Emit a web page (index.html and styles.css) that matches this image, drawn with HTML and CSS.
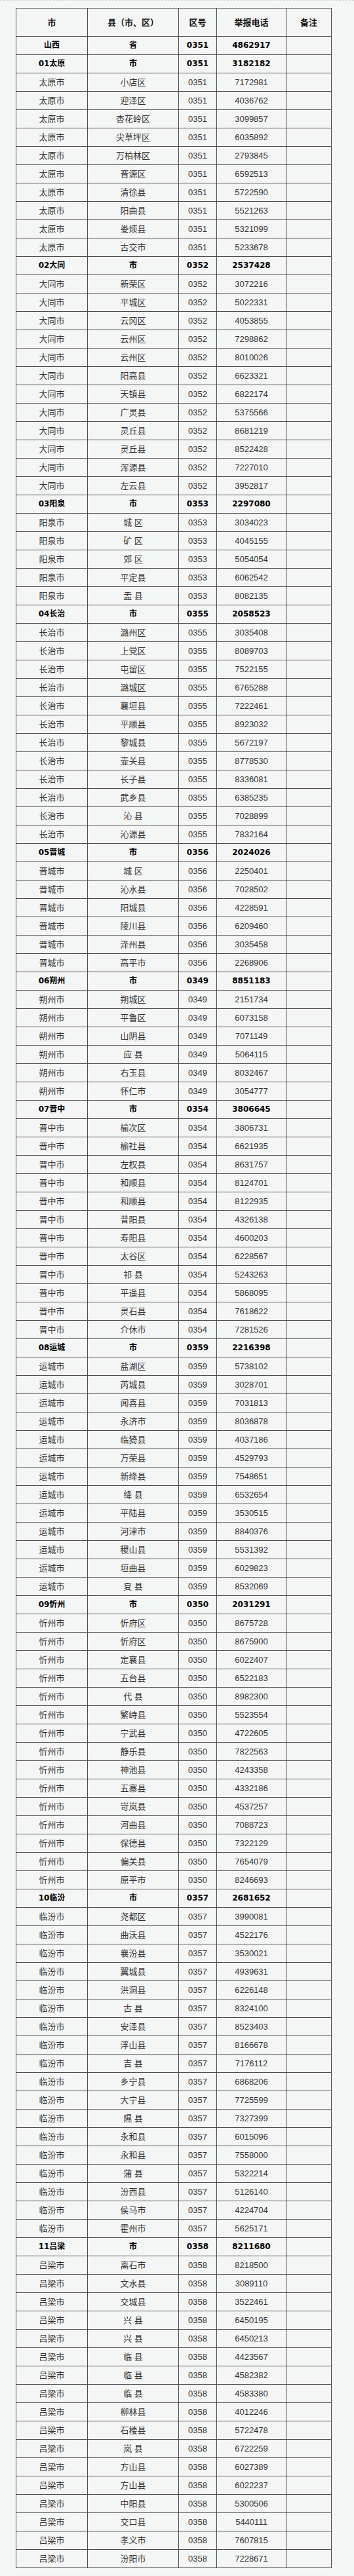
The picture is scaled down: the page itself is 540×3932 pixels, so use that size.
FILE: index.html
```html
<!DOCTYPE html>
<html lang="zh-CN">
<head>
<meta charset="utf-8">
<title>举报电话</title>
<link rel="stylesheet" href="styles.css">
</head>
<body>
<div class="page">
<table class="tbl">
<colgroup><col class="c1"><col class="c2"><col class="c3"><col class="c4"><col class="c5"></colgroup>
<thead>
<tr class="hd"><th>市</th><th>县（市、区）</th><th>区号</th><th>举报电话</th><th>备注</th></tr>
</thead>
<tbody>
<tr class="b"><td>山西</td><td>省</td><td>0351</td><td>4862917</td><td></td></tr>
<tr class="b"><td>01太原</td><td>市</td><td>0351</td><td>3182182</td><td></td></tr>
<tr><td>太原市</td><td>小店区</td><td>0351</td><td>7172981</td><td></td></tr>
<tr><td>太原市</td><td>迎泽区</td><td>0351</td><td>4036762</td><td></td></tr>
<tr><td>太原市</td><td>杏花岭区</td><td>0351</td><td>3099857</td><td></td></tr>
<tr><td>太原市</td><td>尖草坪区</td><td>0351</td><td>6035892</td><td></td></tr>
<tr><td>太原市</td><td>万柏林区</td><td>0351</td><td>2793845</td><td></td></tr>
<tr><td>太原市</td><td>晋源区</td><td>0351</td><td>6592513</td><td></td></tr>
<tr><td>太原市</td><td>清徐县</td><td>0351</td><td>5722590</td><td></td></tr>
<tr><td>太原市</td><td>阳曲县</td><td>0351</td><td>5521263</td><td></td></tr>
<tr><td>太原市</td><td>娄烦县</td><td>0351</td><td>5321099</td><td></td></tr>
<tr><td>太原市</td><td>古交市</td><td>0351</td><td>5233678</td><td></td></tr>
<tr class="b"><td>02大同</td><td>市</td><td>0352</td><td>2537428</td><td></td></tr>
<tr><td>大同市</td><td>新荣区</td><td>0352</td><td>3072216</td><td></td></tr>
<tr><td>大同市</td><td>平城区</td><td>0352</td><td>5022331</td><td></td></tr>
<tr><td>大同市</td><td>云冈区</td><td>0352</td><td>4053855</td><td></td></tr>
<tr><td>大同市</td><td>云州区</td><td>0352</td><td>7298862</td><td></td></tr>
<tr><td>大同市</td><td>云州区</td><td>0352</td><td>8010026</td><td></td></tr>
<tr><td>大同市</td><td>阳高县</td><td>0352</td><td>6623321</td><td></td></tr>
<tr><td>大同市</td><td>天镇县</td><td>0352</td><td>6822174</td><td></td></tr>
<tr><td>大同市</td><td>广灵县</td><td>0352</td><td>5375566</td><td></td></tr>
<tr><td>大同市</td><td>灵丘县</td><td>0352</td><td>8681219</td><td></td></tr>
<tr><td>大同市</td><td>灵丘县</td><td>0352</td><td>8522428</td><td></td></tr>
<tr><td>大同市</td><td>浑源县</td><td>0352</td><td>7227010</td><td></td></tr>
<tr><td>大同市</td><td>左云县</td><td>0352</td><td>3952817</td><td></td></tr>
<tr class="b"><td>03阳泉</td><td>市</td><td>0353</td><td>2297080</td><td></td></tr>
<tr><td>阳泉市</td><td>城 区</td><td>0353</td><td>3034023</td><td></td></tr>
<tr><td>阳泉市</td><td>矿 区</td><td>0353</td><td>4045155</td><td></td></tr>
<tr><td>阳泉市</td><td>郊 区</td><td>0353</td><td>5054054</td><td></td></tr>
<tr><td>阳泉市</td><td>平定县</td><td>0353</td><td>6062542</td><td></td></tr>
<tr><td>阳泉市</td><td>盂 县</td><td>0353</td><td>8082135</td><td></td></tr>
<tr class="b"><td>04长治</td><td>市</td><td>0355</td><td>2058523</td><td></td></tr>
<tr><td>长治市</td><td>潞州区</td><td>0355</td><td>3035408</td><td></td></tr>
<tr><td>长治市</td><td>上党区</td><td>0355</td><td>8089703</td><td></td></tr>
<tr><td>长治市</td><td>屯留区</td><td>0355</td><td>7522155</td><td></td></tr>
<tr><td>长治市</td><td>潞城区</td><td>0355</td><td>6765288</td><td></td></tr>
<tr><td>长治市</td><td>襄垣县</td><td>0355</td><td>7222461</td><td></td></tr>
<tr><td>长治市</td><td>平顺县</td><td>0355</td><td>8923032</td><td></td></tr>
<tr><td>长治市</td><td>黎城县</td><td>0355</td><td>5672197</td><td></td></tr>
<tr><td>长治市</td><td>壶关县</td><td>0355</td><td>8778530</td><td></td></tr>
<tr><td>长治市</td><td>长子县</td><td>0355</td><td>8336081</td><td></td></tr>
<tr><td>长治市</td><td>武乡县</td><td>0355</td><td>6385235</td><td></td></tr>
<tr><td>长治市</td><td>沁 县</td><td>0355</td><td>7028899</td><td></td></tr>
<tr><td>长治市</td><td>沁源县</td><td>0355</td><td>7832164</td><td></td></tr>
<tr class="b"><td>05晋城</td><td>市</td><td>0356</td><td>2024026</td><td></td></tr>
<tr><td>晋城市</td><td>城 区</td><td>0356</td><td>2250401</td><td></td></tr>
<tr><td>晋城市</td><td>沁水县</td><td>0356</td><td>7028502</td><td></td></tr>
<tr><td>晋城市</td><td>阳城县</td><td>0356</td><td>4228591</td><td></td></tr>
<tr><td>晋城市</td><td>陵川县</td><td>0356</td><td>6209460</td><td></td></tr>
<tr><td>晋城市</td><td>泽州县</td><td>0356</td><td>3035458</td><td></td></tr>
<tr><td>晋城市</td><td>高平市</td><td>0356</td><td>2268906</td><td></td></tr>
<tr class="b"><td>06朔州</td><td>市</td><td>0349</td><td>8851183</td><td></td></tr>
<tr><td>朔州市</td><td>朔城区</td><td>0349</td><td>2151734</td><td></td></tr>
<tr><td>朔州市</td><td>平鲁区</td><td>0349</td><td>6073158</td><td></td></tr>
<tr><td>朔州市</td><td>山阴县</td><td>0349</td><td>7071149</td><td></td></tr>
<tr><td>朔州市</td><td>应 县</td><td>0349</td><td>5064115</td><td></td></tr>
<tr><td>朔州市</td><td>右玉县</td><td>0349</td><td>8032467</td><td></td></tr>
<tr><td>朔州市</td><td>怀仁市</td><td>0349</td><td>3054777</td><td></td></tr>
<tr class="b"><td>07晋中</td><td>市</td><td>0354</td><td>3806645</td><td></td></tr>
<tr><td>晋中市</td><td>榆次区</td><td>0354</td><td>3806731</td><td></td></tr>
<tr><td>晋中市</td><td>榆社县</td><td>0354</td><td>6621935</td><td></td></tr>
<tr><td>晋中市</td><td>左权县</td><td>0354</td><td>8631757</td><td></td></tr>
<tr><td>晋中市</td><td>和顺县</td><td>0354</td><td>8124701</td><td></td></tr>
<tr><td>晋中市</td><td>和顺县</td><td>0354</td><td>8122935</td><td></td></tr>
<tr><td>晋中市</td><td>昔阳县</td><td>0354</td><td>4326138</td><td></td></tr>
<tr><td>晋中市</td><td>寿阳县</td><td>0354</td><td>4600203</td><td></td></tr>
<tr><td>晋中市</td><td>太谷区</td><td>0354</td><td>6228567</td><td></td></tr>
<tr><td>晋中市</td><td>祁 县</td><td>0354</td><td>5243263</td><td></td></tr>
<tr><td>晋中市</td><td>平遥县</td><td>0354</td><td>5868095</td><td></td></tr>
<tr><td>晋中市</td><td>灵石县</td><td>0354</td><td>7618622</td><td></td></tr>
<tr><td>晋中市</td><td>介休市</td><td>0354</td><td>7281526</td><td></td></tr>
<tr class="b"><td>08运城</td><td>市</td><td>0359</td><td>2216398</td><td></td></tr>
<tr><td>运城市</td><td>盐湖区</td><td>0359</td><td>5738102</td><td></td></tr>
<tr><td>运城市</td><td>芮城县</td><td>0359</td><td>3028701</td><td></td></tr>
<tr><td>运城市</td><td>闻喜县</td><td>0359</td><td>7031813</td><td></td></tr>
<tr><td>运城市</td><td>永济市</td><td>0359</td><td>8036878</td><td></td></tr>
<tr><td>运城市</td><td>临猗县</td><td>0359</td><td>4037186</td><td></td></tr>
<tr><td>运城市</td><td>万荣县</td><td>0359</td><td>4529793</td><td></td></tr>
<tr><td>运城市</td><td>新绛县</td><td>0359</td><td>7548651</td><td></td></tr>
<tr><td>运城市</td><td>绛 县</td><td>0359</td><td>6532654</td><td></td></tr>
<tr><td>运城市</td><td>平陆县</td><td>0359</td><td>3530515</td><td></td></tr>
<tr><td>运城市</td><td>河津市</td><td>0359</td><td>8840376</td><td></td></tr>
<tr><td>运城市</td><td>稷山县</td><td>0359</td><td>5531392</td><td></td></tr>
<tr><td>运城市</td><td>垣曲县</td><td>0359</td><td>6029823</td><td></td></tr>
<tr><td>运城市</td><td>夏 县</td><td>0359</td><td>8532069</td><td></td></tr>
<tr class="b"><td>09忻州</td><td>市</td><td>0350</td><td>2031291</td><td></td></tr>
<tr><td>忻州市</td><td>忻府区</td><td>0350</td><td>8675728</td><td></td></tr>
<tr><td>忻州市</td><td>忻府区</td><td>0350</td><td>8675900</td><td></td></tr>
<tr><td>忻州市</td><td>定襄县</td><td>0350</td><td>6022407</td><td></td></tr>
<tr><td>忻州市</td><td>五台县</td><td>0350</td><td>6522183</td><td></td></tr>
<tr><td>忻州市</td><td>代 县</td><td>0350</td><td>8982300</td><td></td></tr>
<tr><td>忻州市</td><td>繁峙县</td><td>0350</td><td>5523554</td><td></td></tr>
<tr><td>忻州市</td><td>宁武县</td><td>0350</td><td>4722605</td><td></td></tr>
<tr><td>忻州市</td><td>静乐县</td><td>0350</td><td>7822563</td><td></td></tr>
<tr><td>忻州市</td><td>神池县</td><td>0350</td><td>4243358</td><td></td></tr>
<tr><td>忻州市</td><td>五寨县</td><td>0350</td><td>4332186</td><td></td></tr>
<tr><td>忻州市</td><td>岢岚县</td><td>0350</td><td>4537257</td><td></td></tr>
<tr><td>忻州市</td><td>河曲县</td><td>0350</td><td>7088723</td><td></td></tr>
<tr><td>忻州市</td><td>保德县</td><td>0350</td><td>7322129</td><td></td></tr>
<tr><td>忻州市</td><td>偏关县</td><td>0350</td><td>7654079</td><td></td></tr>
<tr><td>忻州市</td><td>原平市</td><td>0350</td><td>8246693</td><td></td></tr>
<tr class="b"><td>10临汾</td><td>市</td><td>0357</td><td>2681652</td><td></td></tr>
<tr><td>临汾市</td><td>尧都区</td><td>0357</td><td>3990081</td><td></td></tr>
<tr><td>临汾市</td><td>曲沃县</td><td>0357</td><td>4522176</td><td></td></tr>
<tr><td>临汾市</td><td>襄汾县</td><td>0357</td><td>3530021</td><td></td></tr>
<tr><td>临汾市</td><td>翼城县</td><td>0357</td><td>4939631</td><td></td></tr>
<tr><td>临汾市</td><td>洪洞县</td><td>0357</td><td>6226148</td><td></td></tr>
<tr><td>临汾市</td><td>古 县</td><td>0357</td><td>8324100</td><td></td></tr>
<tr><td>临汾市</td><td>安泽县</td><td>0357</td><td>8523403</td><td></td></tr>
<tr><td>临汾市</td><td>浮山县</td><td>0357</td><td>8166678</td><td></td></tr>
<tr><td>临汾市</td><td>吉 县</td><td>0357</td><td>7176112</td><td></td></tr>
<tr><td>临汾市</td><td>乡宁县</td><td>0357</td><td>6868206</td><td></td></tr>
<tr><td>临汾市</td><td>大宁县</td><td>0357</td><td>7725599</td><td></td></tr>
<tr><td>临汾市</td><td>隰 县</td><td>0357</td><td>7327399</td><td></td></tr>
<tr><td>临汾市</td><td>永和县</td><td>0357</td><td>6015096</td><td></td></tr>
<tr><td>临汾市</td><td>永和县</td><td>0357</td><td>7558000</td><td></td></tr>
<tr><td>临汾市</td><td>蒲 县</td><td>0357</td><td>5322214</td><td></td></tr>
<tr><td>临汾市</td><td>汾西县</td><td>0357</td><td>5126140</td><td></td></tr>
<tr><td>临汾市</td><td>侯马市</td><td>0357</td><td>4224704</td><td></td></tr>
<tr><td>临汾市</td><td>霍州市</td><td>0357</td><td>5625171</td><td></td></tr>
<tr class="b"><td>11吕梁</td><td>市</td><td>0358</td><td>8211680</td><td></td></tr>
<tr><td>吕梁市</td><td>离石市</td><td>0358</td><td>8218500</td><td></td></tr>
<tr><td>吕梁市</td><td>文水县</td><td>0358</td><td>3089110</td><td></td></tr>
<tr><td>吕梁市</td><td>交城县</td><td>0358</td><td>3522461</td><td></td></tr>
<tr><td>吕梁市</td><td>兴 县</td><td>0358</td><td>6450195</td><td></td></tr>
<tr><td>吕梁市</td><td>兴 县</td><td>0358</td><td>6450213</td><td></td></tr>
<tr><td>吕梁市</td><td>临 县</td><td>0358</td><td>4423567</td><td></td></tr>
<tr><td>吕梁市</td><td>临 县</td><td>0358</td><td>4582382</td><td></td></tr>
<tr><td>吕梁市</td><td>临 县</td><td>0358</td><td>4583380</td><td></td></tr>
<tr><td>吕梁市</td><td>柳林县</td><td>0358</td><td>4012246</td><td></td></tr>
<tr><td>吕梁市</td><td>石楼县</td><td>0358</td><td>5722478</td><td></td></tr>
<tr><td>吕梁市</td><td>岚 县</td><td>0358</td><td>6722259</td><td></td></tr>
<tr><td>吕梁市</td><td>方山县</td><td>0358</td><td>6027389</td><td></td></tr>
<tr><td>吕梁市</td><td>方山县</td><td>0358</td><td>6022237</td><td></td></tr>
<tr><td>吕梁市</td><td>中阳县</td><td>0358</td><td>5300506</td><td></td></tr>
<tr><td>吕梁市</td><td>交口县</td><td>0358</td><td>5440111</td><td></td></tr>
<tr><td>吕梁市</td><td>孝义市</td><td>0358</td><td>7607815</td><td></td></tr>
<tr><td>吕梁市</td><td>汾阳市</td><td>0358</td><td>7228671</td><td></td></tr>
</tbody>
</table>
</div>
</body>
</html>
```
FILE: styles.css
```css
html, body {
  margin: 0;
  padding: 0;
  background: #f4f6f5;
}
.page {
  border-top: 1px dashed #cdd5dc;
  padding: 11px 0 12px 24px;
}
.tbl {
  border-collapse: collapse;
  table-layout: fixed;
  width: 482px;
  font-family: "Liberation Sans", "Noto Sans CJK SC", sans-serif;
  font-size: 13px;
  color: #333;
  background: #f4f6f5;
}
.c1 { width: 109px; }
.c2 { width: 139px; }
.c3 { width: 58px; }
.c4 { width: 106px; }
.c5 { width: 69px; }
.tbl th,
.tbl td {
  border: 1px solid #4d4d4d;
  padding: 0;
  text-align: center;
  line-height: 27px;
  white-space: pre;
  overflow: hidden;
}
.tbl th {
  line-height: 42px;
  font-family: "Noto Sans CJK SC", sans-serif;
  font-weight: bold;
  color: #111;
}
.tbl .b td {
  font-family: "DejaVu Sans", "Noto Sans CJK SC", sans-serif;
  font-size: 12px;
  font-weight: bold;
  color: #000;
}
```
